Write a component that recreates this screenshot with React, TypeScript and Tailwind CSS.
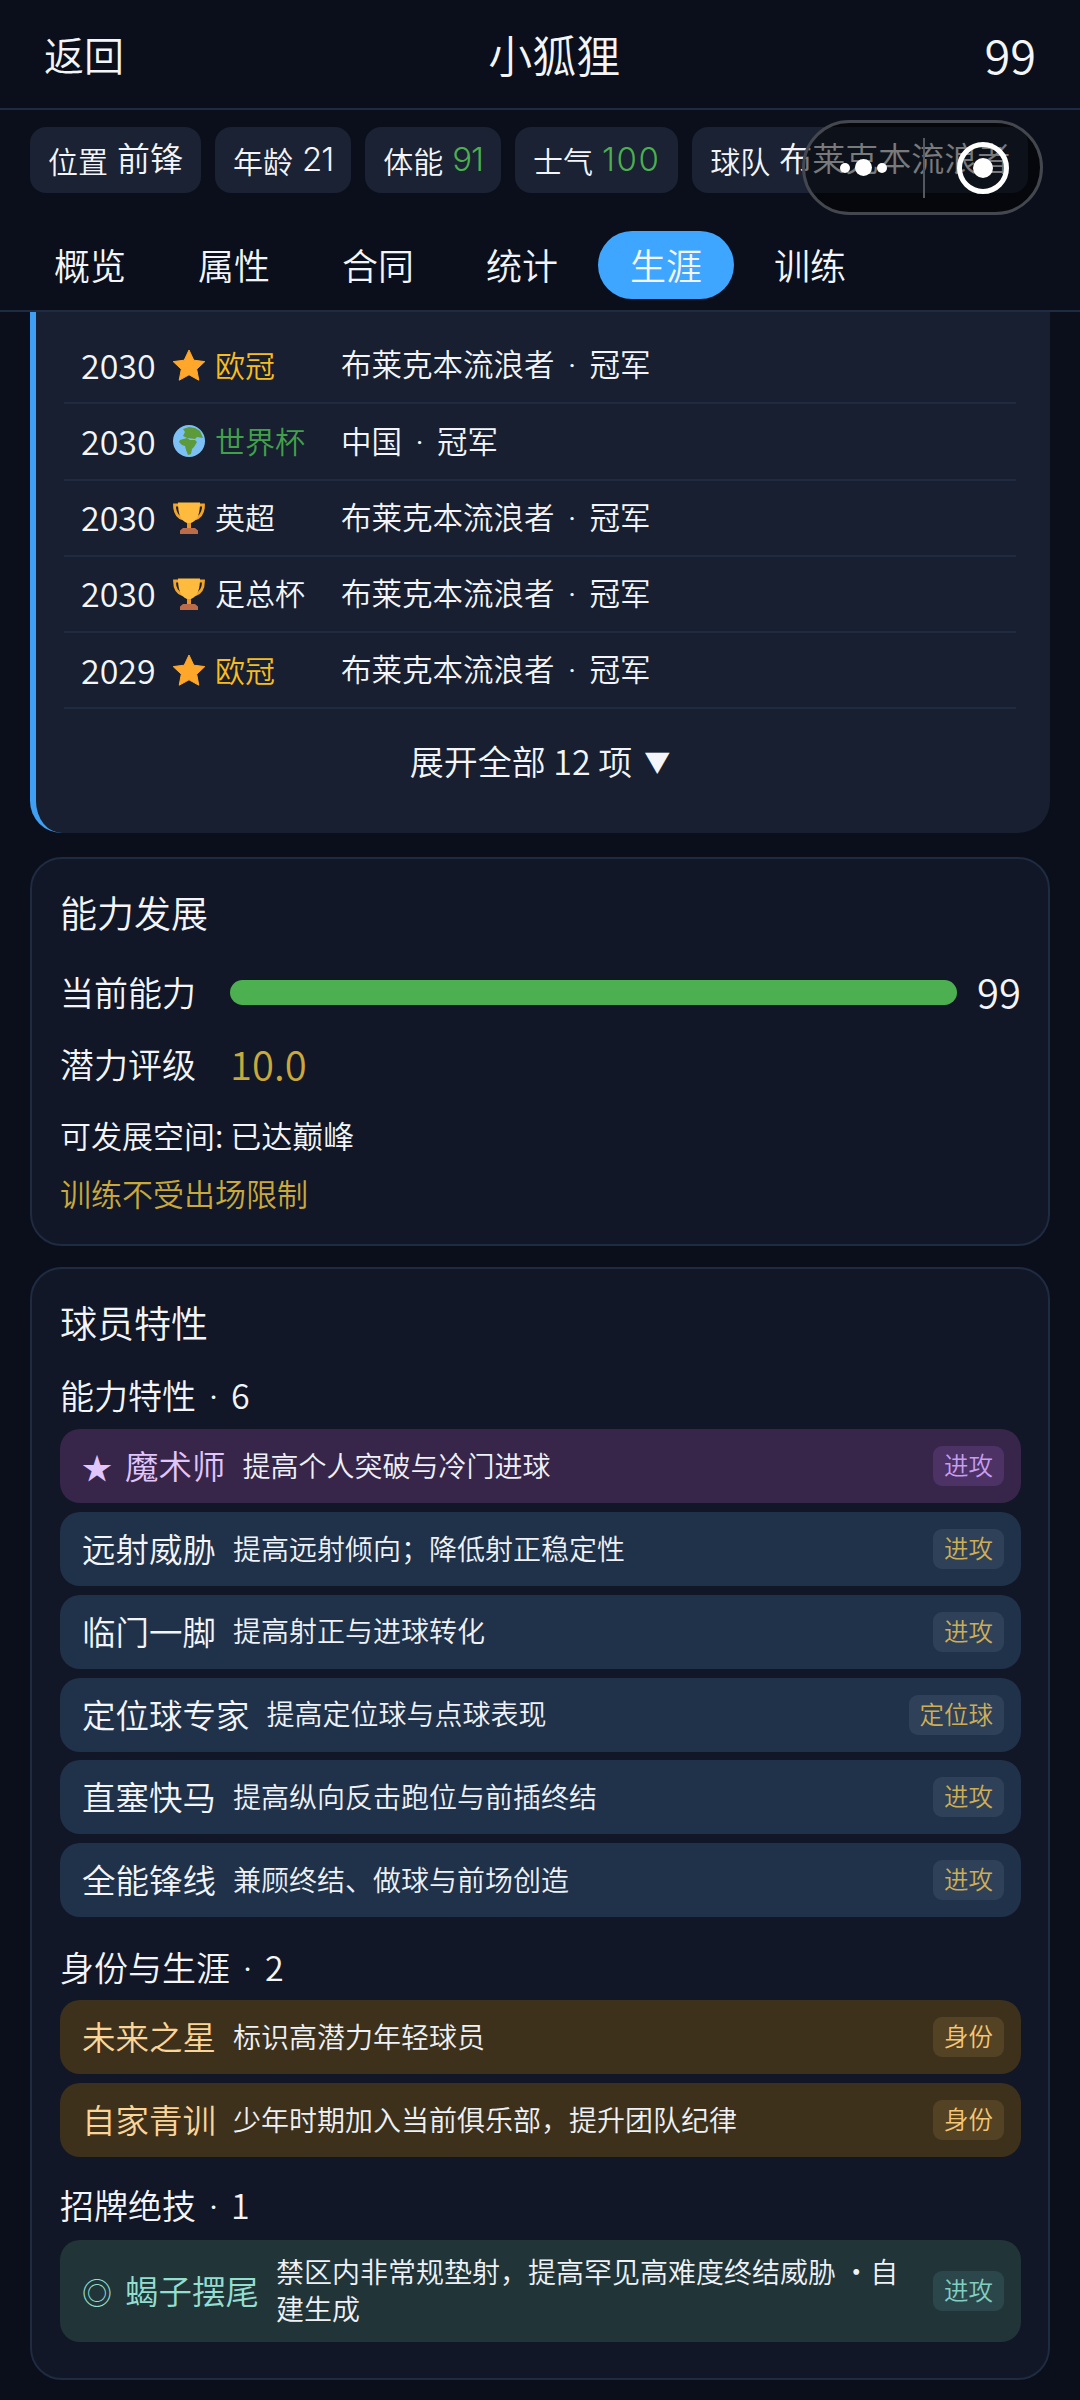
import React from 'react';

const chips = [
  { label: '位置', value: '前锋', color: 'text-[#f3f5f9]' },
  { label: '年龄', value: '21', color: 'text-[#f3f5f9] tracking-[-1px]' },
  { label: '体能', value: '91', color: 'text-[#4caf50] tracking-[-1px]' },
  { label: '士气', value: '100', color: 'text-[#4caf50] tracking-[1.5px]' },
  { label: '球队', value: '布莱克本流浪者', color: 'text-[#f3f5f9]' },
];

const tabs = ['概览', '属性', '合同', '统计', '生涯', '训练'];

const honors = [
  { year: '2030', icon: 'star', name: '欧冠', nameColor: 'text-[#f7bd20]', team: '布莱克本流浪者' },
  { year: '2030', icon: 'globe', name: '世界杯', nameColor: 'text-[#43a04a]', team: '中国' },
  { year: '2030', icon: 'cup', name: '英超', nameColor: 'text-[#f3f5f9]', team: '布莱克本流浪者' },
  { year: '2030', icon: 'cup', name: '足总杯', nameColor: 'text-[#f3f5f9]', team: '布莱克本流浪者' },
  { year: '2029', icon: 'star', name: '欧冠', nameColor: 'text-[#f7bd20]', team: '布莱克本流浪者' },
];

const tones = {
  purple: { box: 'bg-[#38254a]', name: 'text-[#e0c6fb]', tag: 'bg-[#4c3265] text-[#c79df0]' },
  blue: { box: 'bg-[#20314a]', name: 'text-[#f3f5f9]', tag: 'bg-[#2f4059] text-[#cdae55]' },
  gold: { box: 'bg-[#3e311c]', name: 'text-[#fbd598]', tag: 'bg-[#544224] text-[#f5c675]' },
  teal: { box: 'bg-[#213539]', name: 'text-[#93dfcf]', tag: 'bg-[#2c474b] text-[#80cfc0]' },
};

type Tone = keyof typeof tones;

const StarIcon = () => (
  <svg viewBox="0 0 32 32" className="w-[32px] h-[32px]">
    <path d="M16 1l4.800 10.200 11 1.400-8.100 7.600 2.100 11L16 25.800l-9.800 5.400 2.100-11L.2 12.600l11-1.400z" fill="#ffa72b" stroke="#ffa72b" strokeLinejoin="round" />
  </svg>
);

const GlobeIcon = () => (
  <svg viewBox="0 0 32 32" className="w-[32px] h-[32px]">
    <circle cx="16" cy="16" r="16" fill="#7cc0f5" />
    <path d="M10 4l6-2 6 1 5 3 3 7-6-1-2 2-8-1-4-2 2-4z" fill="#5c9a3a" />
    <path d="M7 15l7-2 3 2h5l2 2-3 5-2 2-1 5-3 1-2-5-1-4-3-1-3-3z" fill="#5c9a3a" />
  </svg>
);

const CupIcon = () => (
  <svg viewBox="0 0 32 32" className="w-[32px] h-[32px]">
    <path d="M6 3H1.500c0 7 2.500 12 8.500 14M26 3h4.500c0 7-2.500 12-8.500 14" fill="none" stroke="#f3a328" strokeWidth="2.800" />
    <path d="M5 .5h22c0 10.500-2 17.500-9 20.500v5h-4v-5C7 18 5 11 5 .5z" fill="#ffbb3d" />
    <path d="M14 21h4v5h-4z" fill="#e8952a" />
    <path d="M10 26h12l3 2.500V32H7v-3.500z" fill="#bd6c4a" />
  </svg>
);

const honorIcon = (icon: string) => {
  if (icon === 'star') return <StarIcon />;
  if (icon === 'globe') return <GlobeIcon />;
  return <CupIcon />;
};

const Dot = () => <span className="inline-block w-[35px] text-center leading-none font-['Inter',sans-serif]">·</span>;

const Trait = ({ tone, mark, name, desc, tag }: { tone: Tone; mark?: string; name: string; desc: string; tag: string }) => {
  const t = tones[tone];
  return (
    <div className={`flex items-center min-h-[74px] pl-[22px] pr-[17px] py-[14px] rounded-[20px] ${t.box}`}>
      <span className={`shrink-0 -translate-y-px text-[33.5px] leading-[44px] ${t.name}`}>
        {mark && <span className="inline-block w-[43px] text-[30px] leading-none">{mark}</span>}
        {name}
      </span>
      <span className="flex-1 ml-[17px] mr-[24px] -translate-y-px text-[28px] leading-[37px] text-[#eef1f6]">{desc}</span>
      <span className={`shrink-0 h-[40px] px-[11px] rounded-[9px] text-[24.500px] leading-[38px] ${t.tag}`}>{tag}</span>
    </div>
  );
};

const SubTitle = ({ className, children }: { className: string; children: React.ReactNode }) => (
  <div className={`h-[44px] text-[34px] leading-[42px] text-[#f3f5f9] ${className}`}>{children}</div>
);

export default function App() {
  return (
    <div className="relative w-[1080px] h-[2400px] overflow-hidden bg-[#0a0f1b] font-['Noto_Sans_CJK_SC',sans-serif] font-[350] text-[#f3f5f9]">
      {/* Header */}
      <div className="flex items-center justify-between h-[110px] px-[44px] border-b-2 border-[#1f2b41]">
        <span className="text-[40px]">返回</span>
        <span className="text-[44px]">小狐狸</span>
        <span className="text-[47px]">99</span>
      </div>

      {/* Info chips */}
      <div className="flex gap-[14px] pl-[30px] pt-[17px] h-[102px] overflow-hidden">
        {chips.map((c) => (
          <div key={c.label} className="shrink-0 flex items-center h-[66px] px-[18px] rounded-[16px] bg-[#1a2233] whitespace-nowrap">
            <span className="text-[30px]">{c.label}</span>
            <span className={`ml-[9px] text-[33px] font-['Inter','Noto_Sans_CJK_SC',sans-serif] ${c.color}`}>{c.value}</span>
          </div>
        ))}
      </div>

      {/* Tabs */}
      <div className="flex gap-[8px] pl-[22px] pt-[19px] h-[100px] border-b-2 border-[#1f2b41]">
        {tabs.map((t) => (
          <div key={t} className={`h-[68px] px-[32px] rounded-[34px] text-[36px] leading-[66px] ${t === '生涯' ? 'bg-[#3fa6ff]' : ''}`}>{t}</div>
        ))}
      </div>

      <div className="px-[30px]">
        {/* Honors */}
        <div className="pl-[28px] pr-[34px] pt-[16px] border-l-[6px] border-[#3f9ff5] rounded-b-[32px] bg-[#171f30]">
          {honors.map((h, i) => (
            <div key={i} className="flex items-center h-[76.25px] pl-[17px] pb-[2px] border-b-2 border-[#1f2b41]">
              <span className="w-[92px] text-[34px]">{h.year}</span>
              <span className="w-[42px] pt-[2px]">{honorIcon(h.icon)}</span>
              <span className={`w-[126px] text-[30px] ${h.nameColor}`}>{h.name}</span>
              <span className="text-[30.5px]">{h.team}<Dot />冠军</span>
            </div>
          ))}
          <div className="flex items-center justify-center gap-[12px] h-[106px] ml-[-28px] mr-[-34px] pr-[6px] pb-[4px] text-[34px]">
            <span>展开全部 12 项</span>
            <span className="text-[26px]">▼</span>
          </div>
          <div className="h-[18px]" />
        </div>

        {/* Ability */}
        <div className="mt-[24px] px-[28px] pt-[29px] pb-[30px] border-2 border-[#1f2b41] rounded-[32px] bg-[#111726]">
          <div className="h-[50px] text-[37px] leading-[48px]">能力发展</div>
          <div className="flex items-center mt-[30px] h-[48px]">
            <span className="w-[170px] pb-[2px] text-[34px]">当前能力</span>
            <div className="flex-1 h-[25px] rounded-full bg-[#4caf50]" />
            <span className="ml-[20px] w-[43px] pb-[2px] text-[40px]">99</span>
          </div>
          <div className="flex items-center mt-[20px] h-[56px]">
            <span className="w-[170px] pb-[2px] text-[34px]">潜力评级</span>
            <span className="pb-[2px] text-[40px] text-[#c9a83c]">10.0</span>
          </div>
          <div className="mt-[24px] h-[40px] text-[31px] leading-[38px]">可发展空间: 已达巅峰</div>
          <div className="mt-[18px] h-[40px] text-[31px] leading-[38px] text-[#c9a83c]">训练不受出场限制</div>
        </div>

        {/* Traits */}
        <div className="mt-[21px] pl-[28px] pr-[27px] pt-[29px] pb-[36px] border-2 border-[#1f2b41] rounded-[32px] bg-[#111726]">
          <div className="h-[50px] text-[37px] leading-[48px]">球员特性</div>
          <SubTitle className="mt-[26px]">能力特性<Dot />6</SubTitle>
          <div className="flex flex-col gap-[8.75px] mt-[11px]">
            <Trait tone="purple" mark="★" name="魔术师" desc="提高个人突破与冷门进球" tag="进攻" />
            <Trait tone="blue" name="远射威胁" desc="提高远射倾向；降低射正稳定性" tag="进攻" />
            <Trait tone="blue" name="临门一脚" desc="提高射正与进球转化" tag="进攻" />
            <Trait tone="blue" name="定位球专家" desc="提高定位球与点球表现" tag="定位球" />
            <Trait tone="blue" name="直塞快马" desc="提高纵向反击跑位与前插终结" tag="进攻" />
            <Trait tone="blue" name="全能锋线" desc="兼顾终结、做球与前场创造" tag="进攻" />
          </div>
          <SubTitle className="mt-[29px]">身份与生涯<Dot />2</SubTitle>
          <div className="flex flex-col gap-[9px] mt-[10px]">
            <Trait tone="gold" name="未来之星" desc="标识高潜力年轻球员" tag="身份" />
            <Trait tone="gold" name="自家青训" desc="少年时期加入当前俱乐部，提升团队纪律" tag="身份" />
          </div>
          <SubTitle className="mt-[27px]">招牌绝技<Dot />1</SubTitle>
          <div className="mt-[12px]">
            <Trait tone="teal" mark="◎" name="蝎子摆尾" desc="禁区内非常规垫射，提高罕见高难度终结威胁 ·自建生成" tag="进攻" />
          </div>
        </div>
      </div>

      {/* Mini program capsule */}
      <div className="absolute left-[802px] top-[120px] flex items-center w-[241px] h-[95px] border-[3px] border-[#44474e] rounded-full bg-black/50">
        <div className="flex items-center justify-center gap-[5px] w-[118px] pr-[2px]">
          <span className="w-[10px] h-[10px] rounded-full bg-white" />
          <span className="w-[17px] h-[17px] rounded-full bg-white" />
          <span className="w-[10px] h-[10px] rounded-full bg-white" />
        </div>
        <div className="w-[2px] h-[60px] bg-[#55585f]" />
        <div className="flex-1 flex items-center justify-center">
          <div className="flex items-center justify-center w-[52px] h-[52px] rounded-full border-[5px] border-white">
            <span className="w-[20px] h-[20px] rounded-full bg-white" />
          </div>
        </div>
      </div>
    </div>
  );
}
